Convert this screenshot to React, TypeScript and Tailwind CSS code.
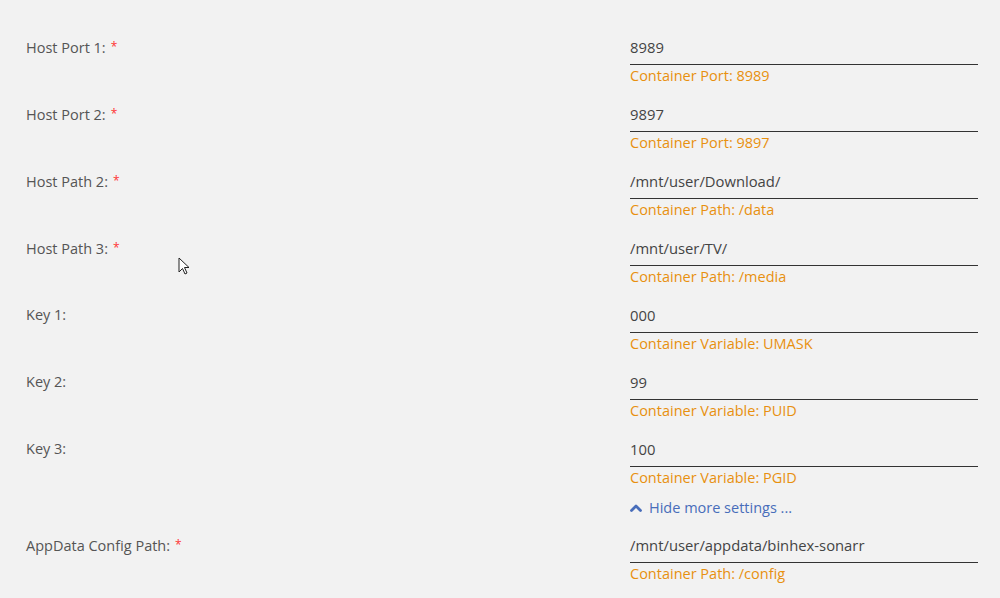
interface Field {
  label: string
  value: string
  hint: string
  required?: boolean
}

const fields: Field[] = [
  { label: 'Host Port 1:', value: '8989', hint: 'Container Port: 8989', required: true },
  { label: 'Host Port 2:', value: '9897', hint: 'Container Port: 9897', required: true },
  { label: 'Host Path 2:', value: '/mnt/user/Download/', hint: 'Container Path: /data', required: true },
  { label: 'Host Path 3:', value: '/mnt/user/TV/', hint: 'Container Path: /media', required: true },
  { label: 'Key 1:', value: '000', hint: 'Container Variable: UMASK' },
  { label: 'Key 2:', value: '99', hint: 'Container Variable: PUID' },
  { label: 'Key 3:', value: '100', hint: 'Container Variable: PGID' },
];

function FieldRow({ label, value, hint, required }: Field) {
  return (
    <div className="flex">
      <div className="w-[604px] shrink-0 text-[14.5px] leading-6 text-[#555]">
        {label}
        {required && <span className="ml-[5px] align-[2px] text-[12px] text-[#f33]">*</span>}
      </div>
      <div className="w-[348px]">
        <div className="h-[30px] border-b border-[#333] text-[14.8px] leading-6 text-[#444]">{value}</div>
        <div className="pt-px text-[14.5px] leading-5 text-[#e8900f]">{hint}</div>
      </div>
    </div>
  );
}

function Cursor() {
  return (
    <svg className="absolute left-[178px] top-[257px]" width="12" height="19" viewBox="0 0 12 19">
      <path d="M1 1 L1 15 L4.5 11.5 L7 17 L9 16 L6.5 10.5 L11 10.5 Z" fill="#fff" stroke="#222" strokeWidth="1" strokeLinejoin="round" />
    </svg>
  );
}

export default function App() {
  return (
    <div className="relative min-h-[598px] bg-[#f2f2f2] pl-[26px] pr-[22px] pt-[35px]" style={{ fontFamily: '"Open Sans", "DejaVu Sans", sans-serif' }}>
      <div className="flex flex-col gap-4">
        {fields.map((f) => (
          <FieldRow key={f.label} {...f} />
        ))}
      </div>

      <div className="ml-[604px] mt-[10px] flex items-center gap-[7px] text-[14.5px] leading-5 text-[#486dba]">
        <svg width="12" height="8" viewBox="0 0 12 8">
          <path d="M1.5 6.5 L6 2 L10.5 6.5" fill="none" stroke="currentColor" strokeWidth="2.8" strokeLinecap="round" strokeLinejoin="round" />
        </svg>
        Hide more settings ...
      </div>

      <div className="mt-[15px]">
        <FieldRow label="AppData Config Path:" value="/mnt/user/appdata/binhex-sonarr" hint="Container Path: /config" required />
      </div>

      <Cursor />
    </div>
  );
}
